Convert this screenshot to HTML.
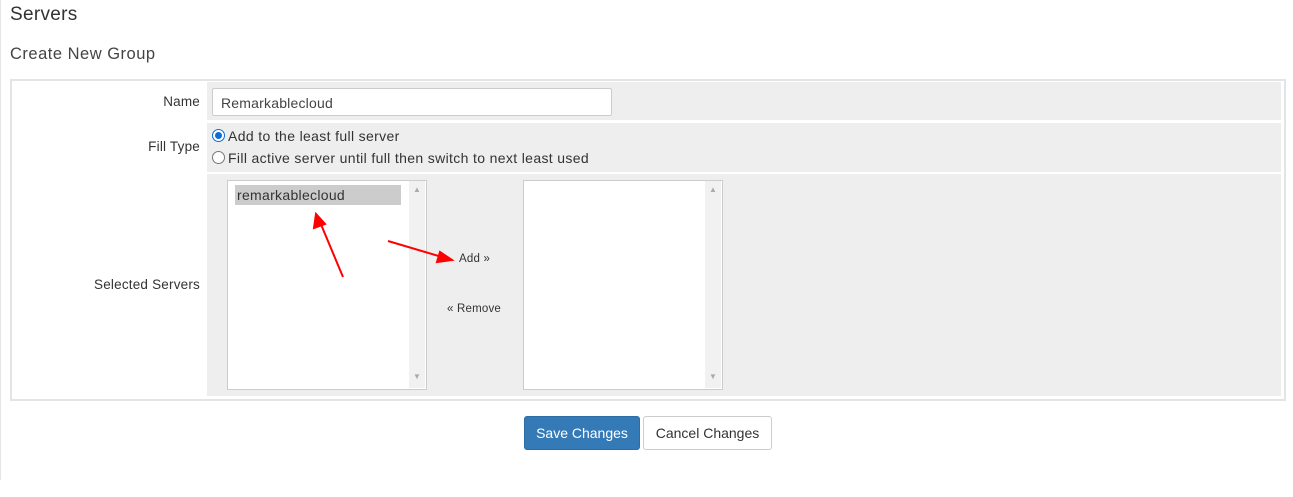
<!DOCTYPE html>
<html><head><style>
body{margin:0;width:1293px;height:497px;background:#fff;font-family:"Liberation Sans",sans-serif;color:#333;position:relative;overflow:hidden}
.a{position:absolute}
.lbl{font-size:13.5px;text-align:right;width:188px;left:12px;letter-spacing:0.2px}
.cell{background:#eee}
</style></head><body>
<div class="a" style="left:0;top:0;width:1px;height:480px;background:#e5e5e5"></div>
<div class="a" style="left:10px;top:4px;font-size:19px;color:#333;letter-spacing:0.3px">Servers</div>
<div class="a" style="left:10px;top:45px;font-size:16.5px;color:#444;letter-spacing:0.5px">Create New Group</div>
<div class="a" style="left:10px;top:79px;width:1272px;height:318px;border:2px solid #e2e5e7;background:#fff"></div>
<div class="a cell" style="left:207px;top:82px;width:1074px;height:38px"></div>
<div class="a cell" style="left:207px;top:123px;width:1074px;height:49px"></div>
<div class="a cell" style="left:207px;top:174px;width:1074px;height:222px"></div>
<div class="a lbl" style="top:94px">Name</div>
<div class="a lbl" style="top:139px">Fill Type</div>
<div class="a lbl" style="top:277px">Selected Servers</div>
<div class="a" style="left:212px;top:88px;width:400px;height:28px;border:1px solid #ccc;border-radius:2px;background:#fff;box-sizing:border-box;font-size:14px;padding:6px 8px;color:#444;letter-spacing:0.2px">Remarkablecloud</div>
<div class="a" style="left:212px;top:129px;width:11px;height:11px;border-radius:50%;border:1px solid #0b6ed8;background:#fff"><div style="margin:2px;width:7px;height:7px;border-radius:50%;background:#0b6ed8"></div></div>
<div class="a" style="left:228px;top:128px;font-size:14px;letter-spacing:0.35px">Add to the least full server</div>
<div class="a" style="left:212px;top:151px;width:11px;height:11px;border-radius:50%;border:1px solid #777;background:#fff"></div>
<div class="a" style="left:228px;top:150px;font-size:14px;letter-spacing:0.35px">Fill active server until full then switch to next least used</div>
<div class="a" style="left:227px;top:180px;width:198px;height:208px;border:1px solid #ccc;background:#fff"></div>
<div class="a" style="left:409px;top:181px;width:16px;height:207px;background:#f1f1f1;color:#aaa;font-size:8px;text-align:center"><div style="margin-top:4px">▲</div><div style="margin-top:178px">▼</div></div>
<div class="a" style="left:235px;top:185px;width:166px;height:20px;background:#ccc;font-size:14px;line-height:20px;padding-left:2px;box-sizing:border-box;letter-spacing:0.3px">remarkablecloud</div>
<div class="a" style="left:523px;top:180px;width:198px;height:208px;border:1px solid #ccc;background:#fff"></div>
<div class="a" style="left:705px;top:181px;width:16px;height:207px;background:#f1f1f1;color:#aaa;font-size:8px;text-align:center"><div style="margin-top:4px">▲</div><div style="margin-top:178px">▼</div></div>
<div class="a" style="left:459px;top:253px;font-size:11.5px;letter-spacing:0.2px">Add »</div>
<div class="a" style="left:447px;top:303px;font-size:11.5px;letter-spacing:0.2px">« Remove</div>
<svg class="a" style="left:0;top:0" width="1293" height="497">
<g stroke="#f00" stroke-width="2" fill="#f00">
<line x1="343" y1="277" x2="320" y2="222"/><polygon points="316,214 314,228 325,224"/>
<line x1="388" y1="241" x2="442" y2="257"/><polygon points="452,260 440,252 437,262"/>
</g></svg>
<div class="a" style="left:524px;top:416px;width:116px;height:34px;background:#337ab7;border:1px solid #2e6da4;border-radius:3px;box-sizing:border-box;color:#fff;font-size:14px;text-align:center;line-height:32px">Save Changes</div>
<div class="a" style="left:643px;top:416px;width:129px;height:34px;background:#fff;border:1px solid #ccc;border-radius:3px;box-sizing:border-box;color:#333;font-size:14px;text-align:center;line-height:32px">Cancel Changes</div>
</body></html>
